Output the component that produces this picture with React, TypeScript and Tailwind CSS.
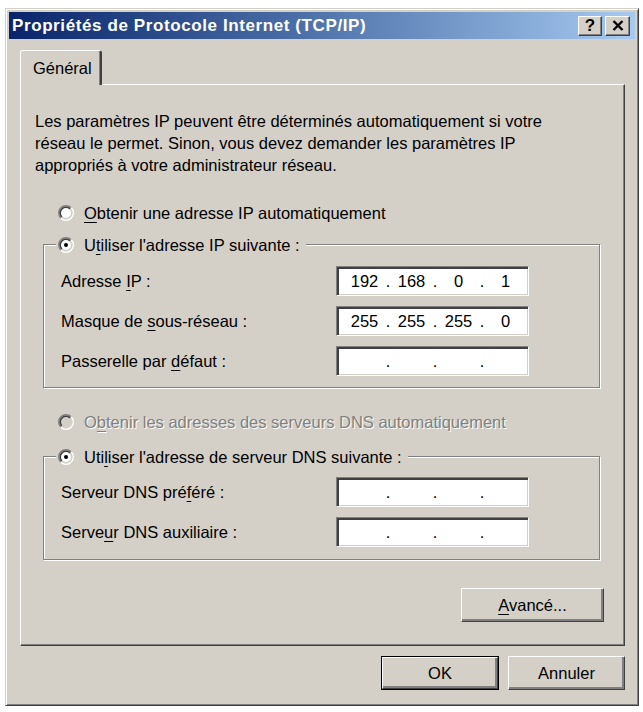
import React from "react"

// Classic Windows 2000 style TCP/IP properties dialog

const FACE = "bg-[#d4d0c8]"

function pt(c: number, r: number, s: number) {
  const k = r * Math.SQRT1_2
  return `${(c + s * k).toFixed(3)} ${(c - s * k).toFixed(3)}`
}

function Radio({ checked = false, disabled = false }: { checked?: boolean; disabled?: boolean }) {
  const c = 8
  const half = (r: number, from: number) =>
    `M ${pt(c, r, from)} A ${r} ${r} 0 0 1 ${pt(c, r, -from)}`
  return (
    <svg width="16" height="16" viewBox="0 0 16 16" className="shrink-0">
      <circle cx="8" cy="8" r="5.5" fill={disabled ? "#d4d0c8" : "#ffffff"} />
      <path d={half(7.25, -1)} stroke="#808080" strokeWidth="1.5" fill="none" />
      <path d={half(7.25, 1)} stroke="#ffffff" strokeWidth="1.5" fill="none" />
      <path d={half(5.75, -1)} stroke="#404040" strokeWidth="1.5" fill="none" />
      <path d={half(5.75, 1)} stroke="#d4d0c8" strokeWidth="1.5" fill="none" />
      {checked && <circle cx="8" cy="8" r="2" fill={disabled ? "#808080" : "#000000"} />}
    </svg>
  )
}

function Key({ children }: { children: React.ReactNode }) {
  return <span className="underline decoration-1 underline-offset-[3px]">{children}</span>
}

function IpField({ value }: { value?: string[] }) {
  const parts = value ?? ["", "", "", ""]
  return (
    <div className="flex h-[30px] w-[193px] shrink-0 items-center border border-t-[#808080] border-l-[#808080] border-r-white border-b-white bg-white pl-[8px] shadow-[inset_2px_2px_0_#404040,inset_-1px_-1px_0_#d4d0c8]">
      {parts.map((p, i) => (
        <React.Fragment key={i}>
          {i > 0 && <span className="w-[8px] text-center">.</span>}
          <span className="w-[39px] text-center">{p}</span>
        </React.Fragment>
      ))}
    </div>
  )
}

function FieldRow({ label, value }: { label: React.ReactNode; value?: string[] }) {
  return (
    <div className="flex h-[30px] items-center">
      <div className="w-[275px]">{label}</div>
      <IpField value={value} />
    </div>
  )
}

function GroupBox({
  legend,
  className,
  children,
}: {
  legend: React.ReactNode
  className?: string
  children: React.ReactNode
}) {
  return (
    <div
      className={
        "relative ml-[22px] w-[557px] border border-[#808080] shadow-[inset_1px_1px_0_#ffffff,1px_1px_0_#ffffff] " +
        (className ?? "")
      }
    >
      <div className={"absolute -top-[11px] left-[12px] flex h-[22px] items-center gap-[10px] pl-[2px] pr-[6px] " + FACE}>
        {legend}
      </div>
      {children}
    </div>
  )
}

function Button({
  children,
  className,
  isDefault = false,
}: {
  children: React.ReactNode
  className?: string
  isDefault?: boolean
}) {
  const bevel =
    "flex items-center justify-center border border-t-white border-l-white border-r-[#404040] border-b-[#404040] shadow-[inset_-2px_-2px_0_#808080,inset_1px_1px_0_#d4d0c8] " +
    FACE
  if (isDefault) {
    return (
      <div className={"border border-black " + (className ?? "")}>
        <div className={bevel + " h-full w-full"}>{children}</div>
      </div>
    )
  }
  return <div className={bevel + " " + (className ?? "")}>{children}</div>
}

function TitleButton({ children, className }: { children: React.ReactNode; className?: string }) {
  return (
    <div
      className={
        "flex h-[20px] items-center justify-center border border-t-white border-l-white border-r-[#404040] border-b-[#404040] shadow-[inset_-1px_-1px_0_#808080] " +
        FACE +
        " " +
        (className ?? "")
      }
    >
      {children}
    </div>
  )
}

export default function App() {
  return (
    <div className="min-h-screen bg-white pt-[8px] pl-[5px] font-['Liberation_Sans',Arial,sans-serif] text-[16.5px] leading-none text-black">
      <div
        className={
          "flex h-[698px] w-[634px] flex-col border border-t-[#d4d0c8] border-l-[#d4d0c8] border-r-[#404040] border-b-[#404040] p-[3px] shadow-[inset_1px_1px_0_#ffffff,inset_-1px_-1px_0_#808080] " +
          FACE
        }
      >
        {/* Title bar */}
        <div className="flex h-[27px] shrink-0 items-center bg-linear-to-r from-[#0a246a] to-[#a6caf0] pl-[3px] pr-[5px]">
          <span className="flex-1 text-[17px] font-bold tracking-[0.6px] text-white">
            Propriétés de Protocole Internet (TCP/IP)
          </span>
          <div className="flex gap-[3px]">
            <TitleButton className="w-[24px]">
              <span className="text-[17px] font-bold">?</span>
            </TitleButton>
            <TitleButton className="w-[25px]">
              <svg width="12" height="11" viewBox="0 0 12 11">
                <path d="M1.5 1 L10.5 10 M10.5 1 L1.5 10" stroke="#000" strokeWidth="2.4" />
              </svg>
            </TitleButton>
          </div>
        </div>

        {/* Tab */}
        <div
          className={
            "relative z-10 mt-[11px] ml-[11px] flex h-[35px] w-[82px] items-center rounded-t-[3px] border-t border-l border-white border-r-2 border-r-[#404040] pl-[12px] shadow-[inset_-1px_0_0_#808080] " +
            FACE
          }
        >
          Général
        </div>

        {/* Tab page */}
        <div className="-mt-[1px] ml-[11px] flex h-[562px] w-[605px] flex-col border border-t-white border-l-white border-r-[#404040] border-b-[#404040] shadow-[inset_-1px_-1px_0_#808080]">
          <p className="mt-[25px] ml-[14px] leading-[22px]">
            Les paramètres IP peuvent être déterminés automatiquement si votre
            <br />
            réseau le permet. Sinon, vous devez demander les paramètres IP
            <br />
            appropriés à votre administrateur réseau.
          </p>

          <div className="mt-[26px] ml-[37px] flex h-[22px] items-center gap-[10px]">
            <Radio />
            <span>
              <Key>O</Key>btenir une adresse IP automatiquement
            </span>
          </div>

          <GroupBox
            className="mt-[20px] h-[144px]"
            legend={
              <>
                <Radio checked />
                <span>
                  U<Key>t</Key>iliser l'adresse IP suivante :
                </span>
              </>
            }
          >
            <div className="flex flex-col gap-[10px] pt-[21px] pl-[17px]">
              <FieldRow
                label={
                  <>
                    Adresse <Key>I</Key>P :
                  </>
                }
                value={["192", "168", "0", "1"]}
              />
              <FieldRow
                label={
                  <>
                    Masque de <Key>s</Key>ous-réseau :
                  </>
                }
                value={["255", "255", "255", "0"]}
              />
              <FieldRow
                label={
                  <>
                    Passerelle par <Key>d</Key>éfaut :
                  </>
                }
              />
            </div>
          </GroupBox>

          <div className="mt-[23px] ml-[37px] flex h-[22px] items-center gap-[10px]">
            <Radio disabled />
            <span className="text-[#808080] [text-shadow:1px_1px_0_#ffffff]">
              O<Key>b</Key>tenir les adresses des serveurs DNS automatiquement
            </span>
          </div>

          <GroupBox
            className="mt-[23px] h-[104px]"
            legend={
              <>
                <Radio checked />
                <span>
                  Uti<Key>l</Key>iser l'adresse de serveur DNS suivante :
                </span>
              </>
            }
          >
            <div className="flex flex-col gap-[10px] pt-[20px] pl-[17px]">
              <FieldRow
                label={
                  <>
                    Serveur DNS pré<Key>f</Key>éré :
                  </>
                }
              />
              <FieldRow
                label={
                  <>
                    Serve<Key>u</Key>r DNS auxiliaire :
                  </>
                }
              />
            </div>
          </GroupBox>

          <Button className="mt-[28px] mr-[20px] h-[34px] w-[143px] self-end">
            <span>
              <Key>A</Key>vancé...
            </span>
          </Button>
        </div>

        {/* Dialog buttons */}
        <div className="mt-[10px] flex justify-end gap-[9px] pr-[10px]">
          <Button isDefault className="h-[34px] w-[118px]">
            OK
          </Button>
          <Button className="h-[34px] w-[117px]">Annuler</Button>
        </div>
      </div>
    </div>
  )
}
